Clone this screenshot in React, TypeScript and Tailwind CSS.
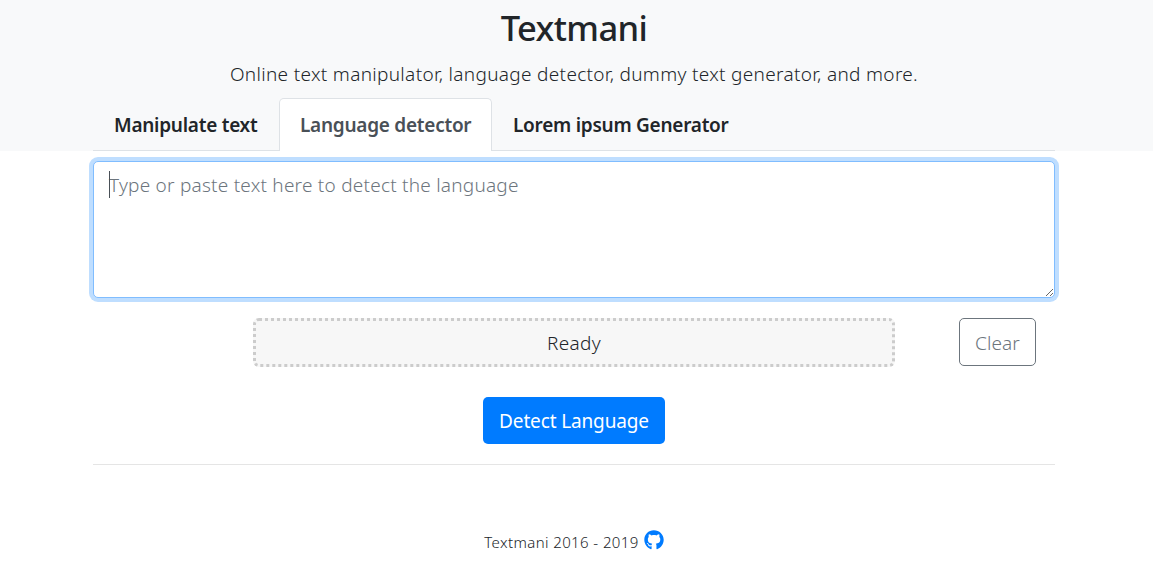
import React from "react";
import { FaGithub } from "react-icons/fa";

const tabs = ["Manipulate text", "Language detector", "Lorem ipsum Generator"];

export default function App() {
  return (
    <div className="h-[580px] w-full overflow-hidden bg-white font-['Noto_Sans',sans-serif] text-[19px] text-[#212529]">
      <header className="h-[151px] bg-[#f8f9fa] px-[93px] pr-[98px] text-center">
        <h1 className="h-[62px] pt-[6px] text-[34.5px] leading-[44px] font-medium tracking-[-0.6px]">Textmani</h1>
        <p className="h-9 leading-[24px] font-light tracking-[0.32px]">Online text manipulator, language detector, dummy text generator, and more.</p>
        <nav className="flex h-[53px] border-b border-[#dee2e6] font-semibold tracking-[-0.26px]">
          <a className="w-[186px] pt-[12px] pl-[21px] text-left leading-[30px] whitespace-nowrap">{tabs[0]}</a>
          <a className="h-[53px] w-[213px] rounded-t-[5px] border border-b-0 border-[#dee2e6] bg-white pt-[11px] pl-[20px] text-left leading-[30px] whitespace-nowrap text-[#495057]">{tabs[1]}</a>
          <a className="pt-[12px] pl-[21px] text-left leading-[30px] whitespace-nowrap">{tabs[2]}</a>
        </nav>
      </header>
      <main className="pr-[98px] pl-[93px]">
        <div className="relative mt-[10px] h-[137px]">
          <textarea
            placeholder="Type or paste text here to detect the language"
            className="block h-[137px] w-full resize-y rounded-[5px] border border-[#80bdff] bg-white px-[15px] py-[8px] leading-[30px] font-light tracking-[0.23px] shadow-[0_0_0_4px_#bfdeff] outline-none placeholder:text-[#6c757d]"
          />
          <span className="absolute top-[10px] left-[16px] h-[27px] w-px bg-[#495057]" />
        </div>
        <div className="mt-[20px] flex">
          <div className="ml-[160px] h-[49px] w-[642px] rounded-[6px] border-[3px] border-dotted border-[#ccc] bg-[#f7f7f7] pt-px text-center leading-[43px] font-light tracking-[0.3px]">Ready</div>
          <button className="ml-[64px] h-[48px] w-[77px] rounded-[5px] border border-[#6c757d] pt-px leading-[46px] font-light tracking-[0.1px] text-[#6c757d]">Clear</button>
        </div>
        <div className="mt-[30px] flex justify-center">
          <button className="h-[47px] w-[182px] rounded-[5px] bg-[#007bff] pt-px leading-[47px] font-normal tracking-[-0.14px] whitespace-nowrap text-white">Detect Language</button>
        </div>
        <hr className="mt-[20px] border-t border-[#e5e5e5]" />
      </main>
      <footer className="mt-[64px] flex items-center justify-center gap-[5px] pr-[5px] text-[15px] leading-[26px] font-light tracking-[0.4px]">
        <span>Textmani 2016 - 2019</span>
        <FaGithub className="-mt-[4px] h-[20px] w-[20px] text-[#007bff]" />
      </footer>
    </div>
  );
}
